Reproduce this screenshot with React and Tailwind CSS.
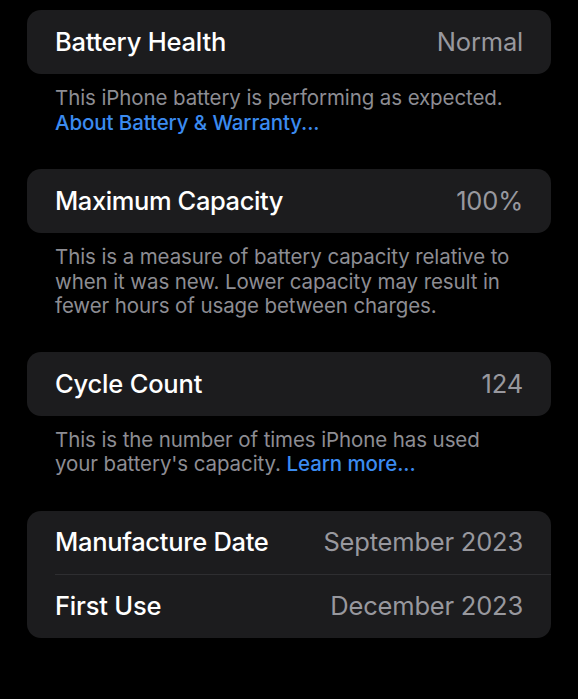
export default function App() {
  const font = { fontFamily: 'Inter, "Noto Sans", sans-serif' };
  return (
    <div className="w-[578px] h-[699px] bg-black overflow-hidden" style={font}>
      <div className="pl-[27px] pr-[27px] pt-[10px] flex flex-col">
        <div className="bg-[#1c1c1e] rounded-[14px] h-[64px] flex items-center justify-between pl-[28px] pr-[28px] pt-[1px]">
          <span className="text-white text-[25.5px] font-medium tracking-[-0.2px]">Battery Health</span>
          <span className="text-[#98989e] text-[25.5px] tracking-[-0.2px]">Normal</span>
        </div>
        <div className="pl-[28px] pr-[31px] pt-[12px] text-[20.5px] leading-[24.5px] text-[#8d8d93] tracking-[-0.1px]">
          <p>This iPhone battery is performing as expected.</p>
          <p className="text-[#3b8bf0] font-medium">About Battery &amp; Warranty...</p>
        </div>

        <div className="mt-[34px] bg-[#1c1c1e] rounded-[14px] h-[64px] flex items-center justify-between pl-[28px] pr-[28px] pt-[1px]">
          <span className="text-white text-[25.5px] font-medium tracking-[-0.4px]">Maximum Capacity</span>
          <span className="text-[#98989e] text-[25.5px] tracking-[-0.2px]">100%</span>
        </div>
        <div className="pl-[28px] pr-[31px] pt-[12px] text-[20.5px] leading-[24.5px] text-[#8d8d93] tracking-[-0.1px]">
          <p>This is a measure of battery capacity relative to when it was new. Lower capacity may result in fewer hours of usage between charges.</p>
        </div>

        <div className="mt-[33px] bg-[#1c1c1e] rounded-[14px] h-[64px] flex items-center justify-between pl-[28px] pr-[28px] pt-[1px]">
          <span className="text-white text-[25.5px] font-medium tracking-[-0.2px]">Cycle Count</span>
          <span className="text-[#98989e] text-[25.5px] tracking-[-0.2px]">124</span>
        </div>
        <div className="pl-[28px] pr-[31px] pt-[12px] text-[20.5px] leading-[24.5px] text-[#8d8d93] tracking-[-0.1px]">
          <p>
            This is the number of times iPhone has used your battery's capacity.{' '}
            <span className="text-[#3b8bf0] font-medium">Learn more...</span>
          </p>
        </div>

        <div className="mt-[34px] bg-[#1c1c1e] rounded-[14px] flex flex-col">
          <div className="h-[63px] flex items-center justify-between pl-[28px] pr-[28px] pt-[1px]">
            <span className="text-white text-[25.5px] font-medium tracking-[-0.3px]">Manufacture Date</span>
            <span className="text-[#98989e] text-[25.5px] tracking-[-0.2px]">September 2023</span>
          </div>
          <div className="ml-[28px] h-px bg-[#2e2e31]" />
          <div className="h-[63px] flex items-center justify-between pl-[28px] pr-[28px] pt-[1px]">
            <span className="text-white text-[25.5px] font-medium tracking-[-0.2px]">First Use</span>
            <span className="text-[#98989e] text-[25.5px] tracking-[-0.2px]">December 2023</span>
          </div>
        </div>
      </div>
    </div>
  );
}
